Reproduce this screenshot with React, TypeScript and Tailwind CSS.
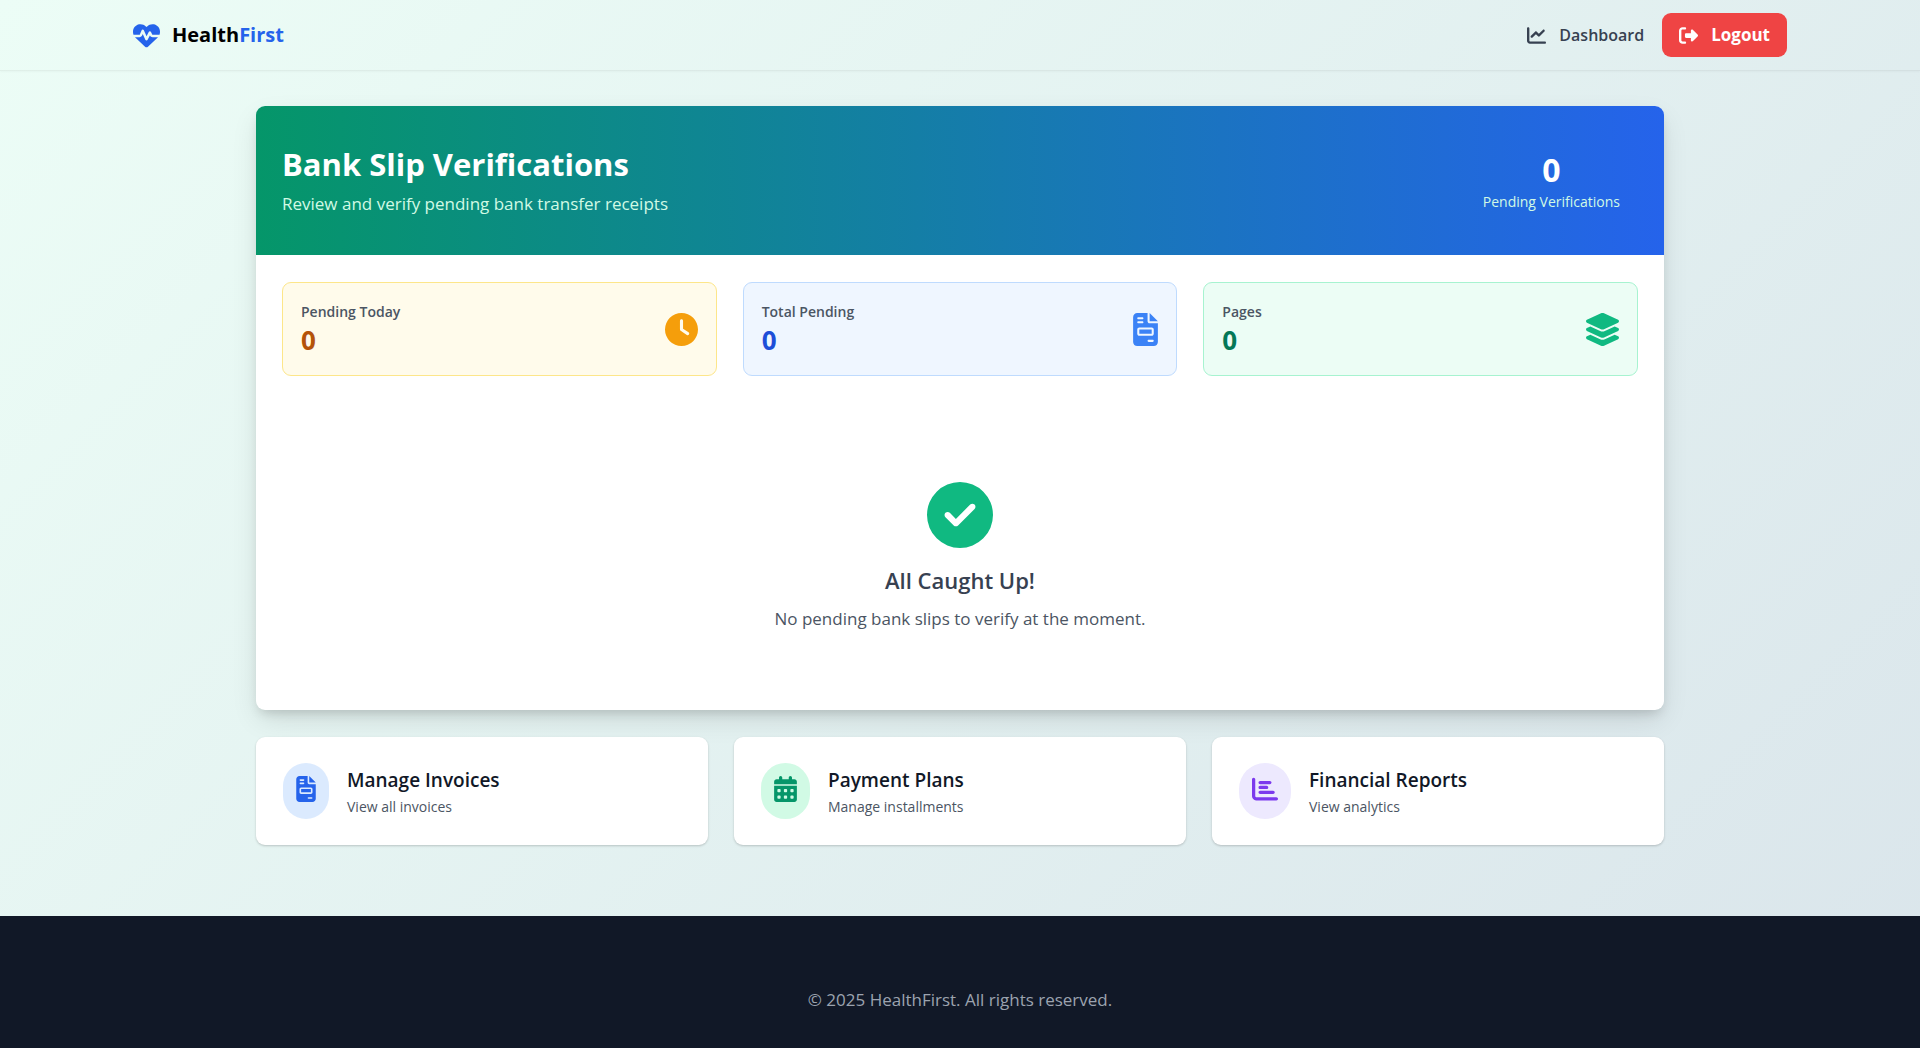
import type { ReactNode } from "react";
import {
  FaCalendarDays,
  FaChartBar,
  FaChartLine,
  FaCircleCheck,
  FaClock,
  FaFileInvoice,
  FaHeartPulse,
  FaLayerGroup,
  FaRightFromBracket,
} from "react-icons/fa6";

const stats = [
  {
    label: "Pending Today",
    value: 0,
    card: "border-[#fde68a] bg-[#fffbeb]",
    number: "text-[#b45309]",
    icon: <FaClock className="size-[33px] text-[#f59e0b]" />,
  },
  {
    label: "Total Pending",
    value: 0,
    card: "border-[#bfdbfe] bg-[#eff6ff]",
    number: "text-[#1d4ed8]",
    icon: <FaFileInvoice className="h-[33px] w-[25px] text-[#3b82f6]" />,
  },
  {
    label: "Pages",
    value: 0,
    card: "border-[#a7f3d0] bg-[#ecfdf5]",
    number: "text-[#047857]",
    icon: <FaLayerGroup viewBox="32 0 512 512" className="size-[33px] text-[#10b981]" />,
  },
];

function QuickLink({ title, note, tint, icon }: { title: string; note: string; tint: string; icon: ReactNode }) {
  return (
    <a
      href="#"
      className="flex items-center gap-[18px] rounded-[9px] bg-white px-[27px] py-[26px] shadow-[0_1px_3px_rgba(0,0,0,0.1),0_1px_2px_rgba(0,0,0,0.1)]"
    >
      <span className={`rounded-full px-[13px] pt-[13px] pb-[17px] ${tint}`}>{icon}</span>
      <span className="pt-[3px]">
        <span className="block text-[19px] leading-[26px] font-semibold text-[#111827]">{title}</span>
        <span className="mt-[3px] block text-[14px] leading-[22px] text-[#4b5563]">{note}</span>
      </span>
    </a>
  );
}

export default function App() {
  return (
    <div className="flex min-h-screen flex-col bg-[linear-gradient(135deg,#ecfdf6_0%,#dae5eb_100%)] font-['Open_Sans','Noto_Sans',sans-serif] text-[16px] leading-[26px]">
      <header className="border-b border-black/5 shadow-[0_1px_2px_rgba(0,0,0,0.03)]">
        <nav className="mx-auto flex max-w-[1690px] items-center justify-between px-[18px] py-[13px]">
          <a href="#" className="flex items-center gap-[12px] text-[20px] font-bold text-black">
            <FaHeartPulse className="size-[27px] text-[#2563eb]" />
            <span>
              Health<span className="text-[#2563eb]">First</span>
            </span>
          </a>
          <div className="flex items-center gap-[18px]">
            <a href="#" className="flex items-center gap-[13px] text-[16px] font-semibold text-[#374151]">
              <FaChartLine className="size-[19px]" />
              Dashboard
            </a>
            <button
              type="button"
              className="flex items-center gap-[13px] rounded-[9px] bg-[#ef4444] px-[17px] py-[9px] text-[17px] font-bold text-white"
            >
              <FaRightFromBracket className="size-[19px]" />
              Logout
            </button>
          </div>
        </nav>
      </header>

      <main className="mx-auto w-full max-w-[1408px] pt-[35px] pb-[71px]">
        <section className="overflow-hidden rounded-[9px] bg-white shadow-[0_11px_28px_-3px_rgba(0,0,0,0.12),0_6px_12px_-4px_rgba(0,0,0,0.16)]">
          <div className="flex items-center justify-between bg-[linear-gradient(to_right,#059669,#2563eb)] p-[26px]">
            <div>
              <h1 className="text-[31px] leading-[38px] font-bold text-white">Bank Slip Verifications</h1>
              <p className="mt-[8px] text-[17px] text-[#d1fae5]">Review and verify pending bank transfer receipts</p>
            </div>
            <div className="px-[18px] py-[17px] text-center">
              <div className="text-[32px] leading-[42px] font-bold text-white">0</div>
              <div className="text-[14px] leading-[21px] text-[#d1fae5]">Pending Verifications</div>
            </div>
          </div>

          <div className="px-[26px] py-[27px]">
            <div className="grid grid-cols-3 gap-[26px]">
              {stats.map((s) => (
                <div
                  key={s.label}
                  className={`flex items-center justify-between rounded-[9px] border px-[18px] py-[17px] ${s.card}`}
                >
                  <div>
                    <p className="text-[14px] leading-[23px] font-semibold text-[#4b5563]">{s.label}</p>
                    <p className={`text-[26px] leading-[35px] font-bold ${s.number}`}>{s.value}</p>
                  </div>
                  {s.icon}
                </div>
              ))}
            </div>

            <div className="flex flex-col items-center pt-[106px] pb-[51px] text-center">
              <FaCircleCheck className="size-[66px] text-[#10b981]" />
              <h2 className="mt-[17px] text-[22px] leading-[30px] font-semibold text-[#374151]">All Caught Up!</h2>
              <p className="mt-[11px] text-[17px] text-[#4b5563]">No pending bank slips to verify at the moment.</p>
            </div>
          </div>
        </section>

        <section className="mt-[27px] grid grid-cols-3 gap-[26px]">
          <QuickLink
            title="Manage Invoices"
            note="View all invoices"
            tint="bg-[#dbeafe]"
            icon={<FaFileInvoice className="h-[26px] w-[20px] text-[#2563eb]" />}
          />
          <QuickLink
            title="Payment Plans"
            note="Manage installments"
            tint="bg-[#d1fae5]"
            icon={<FaCalendarDays className="h-[26px] w-[23px] text-[#059669]" />}
          />
          <QuickLink
            title="Financial Reports"
            note="View analytics"
            tint="bg-[#ede9fe]"
            icon={<FaChartBar className="size-[26px] text-[#7c3aed]" />}
          />
        </section>
      </main>

      <footer className="grow bg-[#111827] pt-[71px] pb-[35px] text-center text-[17px] text-[#9ca3af]">
        <p>© 2025 HealthFirst. All rights reserved.</p>
      </footer>
    </div>
  );
}
